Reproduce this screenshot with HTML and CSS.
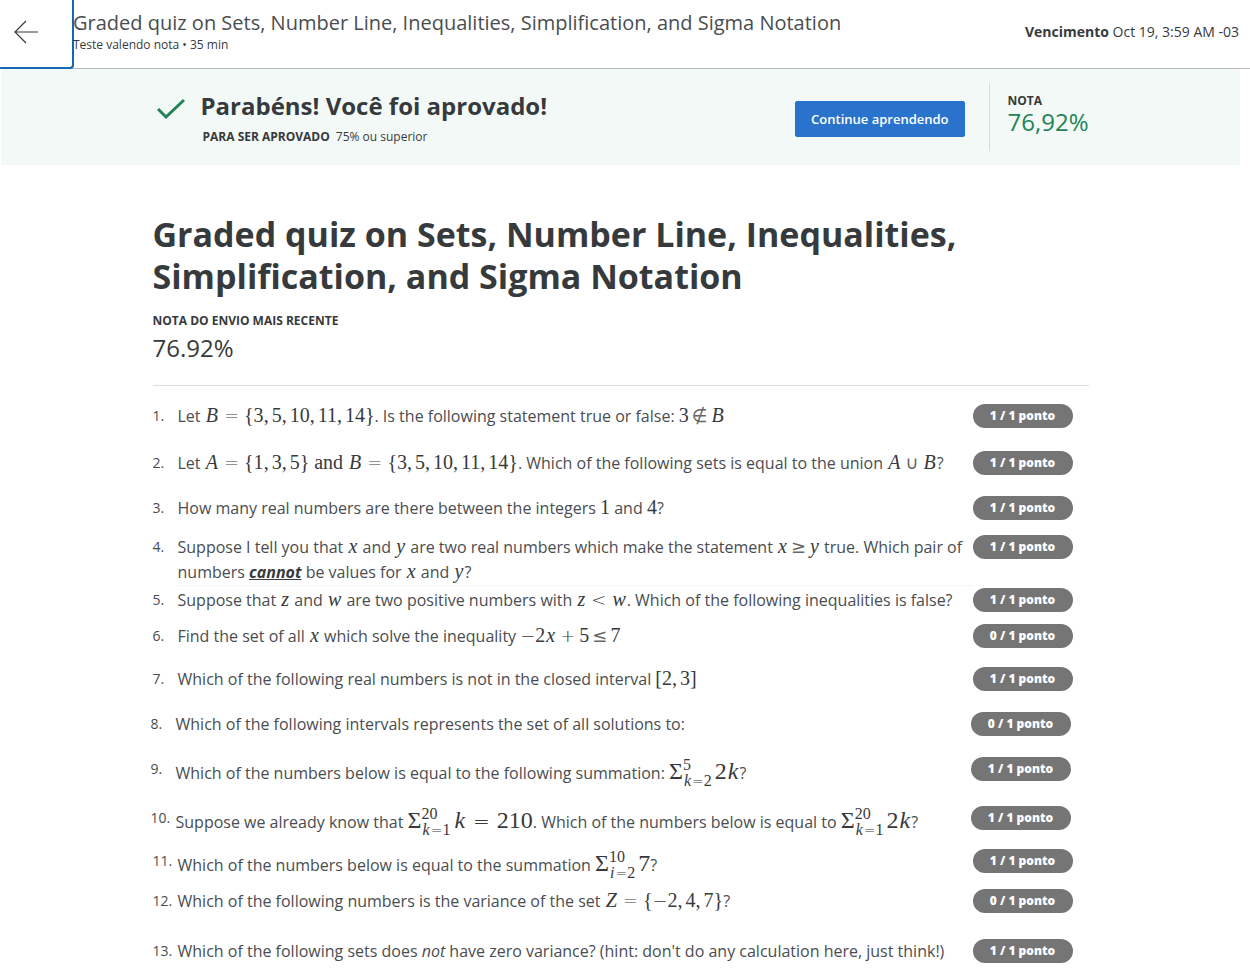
FILE: index.html
```html
<!DOCTYPE html>
<html lang="pt-BR">
<head>
<meta charset="utf-8">
<meta name="viewport" content="width=device-width, initial-scale=1">
<title>Graded quiz</title>
<link rel="stylesheet" href="styles.css">
</head>
<body>
<header class="topbar">
  <button class="back" type="button" aria-label="Voltar">
    <svg width="24" height="24" viewBox="0 0 24 24" fill="none" stroke="#373a3c" stroke-width="1.2"><path d="M24 12H1M12 1L1 12L12 23"/></svg>
  </button>
  <div class="topbar-text">
    <div class="topbar-title">Graded quiz on Sets, Number Line, Inequalities, Simplification, and Sigma Notation</div>
    <div class="topbar-sub">Teste valendo nota • 35 min</div>
  </div>
  <div class="due"><strong>Vencimento</strong> Oct 19, 3:59 AM -03</div>
</header>

<section class="banner">
  <div class="container banner-inner">
    <svg class="check" width="28" height="22" viewBox="0 0 28 22" fill="none" stroke="#1f8354" stroke-width="3"><path d="M1 11L9 19L27 2"/></svg>
    <div class="banner-text">
      <h2 class="banner-title">Parabéns! Você foi aprovado!</h2>
      <p class="banner-sub"><strong>PARA SER APROVADO</strong><span>75% ou superior</span></p>
    </div>
    <button class="continue" type="button">Continue aprendendo</button>
    <div class="grade">
      <div class="label">NOTA</div>
      <div class="grade-value">76,92%</div>
    </div>
  </div>
</section>

<main class="page">
  <div class="container">
    <h1 class="title">Graded quiz on Sets, Number Line, Inequalities, Simplification, and Sigma Notation</h1>
    <div class="label">NOTA DO ENVIO MAIS RECENTE</div>
    <div class="latest">76.92%</div>
    <ol class="questions">
      <li class="q gap-xl"><span class="num">1.</span>
        <div class="text">Let <span class="math"><i>B</i><b class="rel">=</b>{3<b class="c">,</b>5<b class="c">,</b>10<b class="c">,</b>11<b class="c">,</b>14}</span>. Is the following statement true or false: <span class="math">3<b class="rel sym">∉</b><i>B</i></span></div>
        <span class="badge">1 / 1 ponto</span></li>
      <li class="q gap-l"><span class="num">2.</span>
        <div class="text">Let <span class="math"><i>A</i><b class="rel">=</b>{1<b class="c">,</b>3<b class="c">,</b>5} and <i>B</i><b class="rel">=</b>{3<b class="c">,</b>5<b class="c">,</b>10<b class="c">,</b>11<b class="c">,</b>14}</span>. Which of the following sets is equal to the union <span class="math"><i>A</i><b class="bin sym">∪</b><i>B</i></span>?</div>
        <span class="badge">1 / 1 ponto</span></li>
      <li class="q gap-m"><span class="num">3.</span>
        <div class="text">How many real numbers are there between the integers <span class="math">1</span> and <span class="math">4</span>?</div>
        <span class="badge">1 / 1 ponto</span></li>
      <li class="q gap-xs"><span class="num">4.</span>
        <div class="text ruled">Suppose I tell you that <span class="math"><i>x</i></span> and <span class="math"><i>y</i></span> are two real numbers which make the statement <span class="math"><i>x</i><b class="rel sym">≥</b><i>y</i></span> true. Which pair of numbers <strong class="cannot">cannot</strong> be values for <span class="math"><i>x</i></span> and <span class="math"><i>y</i></span>?</div>
        <span class="badge">1 / 1 ponto</span></li>
      <li class="q gap-s"><span class="num">5.</span>
        <div class="text">Suppose that <span class="math"><i>z</i></span> and <span class="math"><i>w</i></span> are two positive numbers with <span class="math"><i>z</i><b class="rel">&lt;</b><i>w</i></span>. Which of the following inequalities is false?</div>
        <span class="badge">1 / 1 ponto</span></li>
      <li class="q gap-ml"><span class="num">6.</span>
        <div class="text">Find the set of all <span class="math"><i>x</i></span> which solve the inequality <span class="math"><b class="sign">−</b>2<i>x</i><b class="bin">+</b>5<b class="rel sym">≤</b>7</span></div>
        <span class="badge">0 / 1 ponto</span></li>
      <li class="q gap-l"><span class="num">7.</span>
        <div class="text">Which of the following real numbers is not in the closed interval <span class="math">[2<b class="c">,</b>3]</span></div>
        <span class="badge">1 / 1 ponto</span></li>
      <li class="q out gap-l"><span class="num">8.</span>
        <div class="text">Which of the following intervals represents the set of all solutions to:</div>
        <span class="badge">0 / 1 ponto</span></li>
      <li class="q out gap-l"><span class="num">9.</span>
        <div class="text tall">Which of the numbers below is equal to the following summation: <span class="math big">Σ<span class="lim"><span>5</span><span><i>k</i><b class="sign">=</b>2</span></span>2<i>k</i></span>?</div>
        <span class="badge">1 / 1 ponto</span></li>
      <li class="q out gap-m"><span class="num">10.</span>
        <div class="text tall">Suppose we already know that <span class="math big">Σ<span class="lim"><span>20</span><span><i>k</i><b class="sign">=</b>1</span></span><i>k</i><b class="rel">=</b>210</span>. Which of the numbers below is equal to <span class="math big">Σ<span class="lim"><span>20</span><span><i>k</i><b class="sign">=</b>1</span></span>2<i>k</i></span>?</div>
        <span class="badge">1 / 1 ponto</span></li>
      <li class="q gap-s"><span class="num">11.</span>
        <div class="text tall">Which of the numbers below is equal to the summation <span class="math big">Σ<span class="lim"><span>10</span><span><i>i</i><b class="sign">=</b>2</span></span>7</span>?</div>
        <span class="badge">1 / 1 ponto</span></li>
      <li class="q gap-xxl"><span class="num">12.</span>
        <div class="text">Which of the following numbers is the variance of the set <span class="math"><i>Z</i><b class="rel">=</b>{<b class="sign">−</b>2<b class="c">,</b>4<b class="c">,</b>7}</span>?</div>
        <span class="badge">0 / 1 ponto</span></li>
      <li class="q"><span class="num">13.</span>
        <div class="text">Which of the following sets does <em>not</em> have zero variance? (hint: don't do any calculation here, just think!)</div>
        <span class="badge">1 / 1 ponto</span></li>
    </ol>
  </div>
</main>
</body>
</html>
```

FILE: styles.css
```css
* { box-sizing: border-box; }

body {
  margin: 0;
  background: #fff;
  color: #373a3c;
  font-family: "Open Sans", sans-serif;
  font-size: 16px;
  line-height: 25px;
}

h1, h2, p, ol { margin: 0; padding: 0; }
button { font-family: inherit; cursor: pointer; }

.container { max-width: 936px; margin: 0 auto; }

/* Top bar */
.topbar {
  display: flex;
  align-items: stretch;
  min-height: 69px;
  padding-right: 11px;
  border-bottom: 1px solid #bbb;
}
.back {
  width: 74px;
  margin-bottom: -1px;
  padding: 0 20px 4px 14px;
  border: solid #1666b8;
  border-width: 0 2px 2px 0;
  border-radius: 0 0 4px 0;
  background: #fff;
  display: flex;
  align-items: center;
  flex: none;
}
.back svg { flex: none; }
.topbar-text { flex: 1; margin-left: -1px; padding-top: 9px; }
.topbar-title { font-size: 20px; line-height: 28px; color: #4a4d50; }
.topbar-sub { font-size: 12px; line-height: 16px; }
.due { padding-top: 20px; font-size: 14px; line-height: 24px; white-space: nowrap; }

/* Result banner */
.banner { margin: 0 10px 0 1px; background: #f3f9f7; }
.banner-inner { display: flex; align-items: center; min-height: 96px; }
.check { flex: none; margin: 0 16px 16px 4px; }
.banner-text { flex: 1; }
.banner-title { font-size: 24px; line-height: 38px; }
.banner-sub { display: flex; gap: 6px; padding: 2px 0 0 2px; font-size: 12px; line-height: 20px; }
.continue {
  height: 36px;
  margin: 4px 24px 0 0;
  padding: 0 15px;
  border: 1px solid #2a73cc;
  border-radius: 2px;
  background: #2a73cc;
  color: #fff;
  font-size: 13px;
  font-weight: 600;
}
.grade { min-height: 68px; padding: 8px 0 0 18px; border-left: 1px solid #d5dbd9; }
.grade-value { font-size: 24px; line-height: 22px; color: #1f8354; }
.label { font-size: 12px; font-weight: 700; line-height: 20px; }

/* Quiz */
.page { margin: 0 10px 0 1px; padding: 48px 0 18px; }
.title { margin-bottom: 14px; font-size: 34px; line-height: 42px; }
.latest { padding: 4px 0 24px; font-size: 24px; line-height: 26px; border-bottom: 1px solid #ddd; }
.questions { padding: 18px 16px 0 0; list-style: none; }

.q { display: grid; grid-template-columns: 25px minmax(0, 1fr) 100px; align-items: start; }
.out { margin-left: -2px; margin-right: 2px; }
.gap-xs { margin-bottom: 2px; }
.gap-s { margin-bottom: 11px; }
.gap-m { margin-bottom: 14px; }
.gap-ml { margin-bottom: 18px; }
.gap-l { margin-bottom: 20px; }
.gap-xl { margin-bottom: 22px; }
.gap-xxl { margin-bottom: 25px; }

.num { font-size: 14px; line-height: 23px; color: #4a4d50; }
.text { color: #4a4d50; }
.tall { padding-top: 2px; }
.ruled { border-bottom: 1px solid #f4f4f4; }
.cannot { font-style: italic; text-decoration: underline; color: #373a3c; }
.badge {
  border-radius: 12px;
  background: #757575;
  color: #fff;
  font-size: 12px;
  font-weight: 800;
  line-height: 24px;
  text-align: center;
}

/* Math */
.math { font-family: "Liberation Serif", serif; font-size: 20px; line-height: 1; white-space: nowrap; color: #373a3c; }
.math i { margin: 0 1px; }
.math b { font-weight: 400; }
.c { margin-right: 3px; }
.math .rel, .math .bin, .math .sign { font-family: "DejaVu Sans", sans-serif; font-weight: 200; font-size: 18px; line-height: 1; }
.math .sym { font-family: "DejaVu Sans", sans-serif; font-weight: 400; color: #666; }
.rel { margin: 0 5px; }
.sym.rel { margin: 0 3px; }
.bin { margin: 0 4px; }
.math.big { font-size: 24px; }
.math.big .rel { margin: 0 7px; font-size: 20px; }
.lim {
  display: inline-flex;
  flex-direction: column;
  margin: -8px 3px -8px 0;
  font-size: 16px;
  line-height: 16px;
  vertical-align: 9px;
}
.math .lim .sign { font-size: 14px; }
```
